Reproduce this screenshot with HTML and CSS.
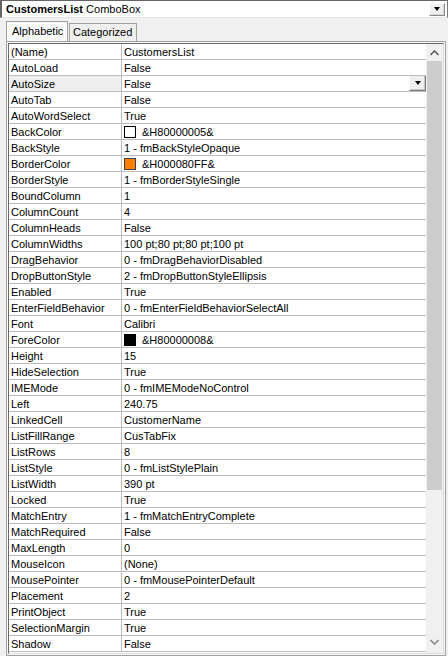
FILE: index.html
```html
<!DOCTYPE html>
<html>
<head>
<meta charset="utf-8">
<link rel="stylesheet" href="styles.css">
</head>
<body>
<div class="combo">
  <span class="combo-text"><b>CustomersList</b> ComboBox</span>
  <span class="drop-btn"><span class="tri"></span></span>
</div>
<div class="tabs">
  <div class="tab active">Alphabetic</div>
  <div class="tab">Categorized</div>
</div>
<div class="frame">
  <div class="inner">
    <div class="rows">
      <div class="row"><div class="name">(Name)</div><div class="val">CustomersList</div></div>
      <div class="row"><div class="name">AutoLoad</div><div class="val">False</div></div>
      <div class="row sel"><div class="name">AutoSize</div><div class="val">False<span class="cell-btn"><span class="tri"></span></span></div></div>
      <div class="row"><div class="name">AutoTab</div><div class="val">False</div></div>
      <div class="row"><div class="name">AutoWordSelect</div><div class="val">True</div></div>
      <div class="row"><div class="name">BackColor</div><div class="val"><span class="swatch white"></span>&amp;H80000005&amp;</div></div>
      <div class="row"><div class="name">BackStyle</div><div class="val">1 - fmBackStyleOpaque</div></div>
      <div class="row"><div class="name">BorderColor</div><div class="val"><span class="swatch orange"></span>&amp;H000080FF&amp;</div></div>
      <div class="row"><div class="name">BorderStyle</div><div class="val">1 - fmBorderStyleSingle</div></div>
      <div class="row"><div class="name">BoundColumn</div><div class="val">1</div></div>
      <div class="row"><div class="name">ColumnCount</div><div class="val">4</div></div>
      <div class="row"><div class="name">ColumnHeads</div><div class="val">False</div></div>
      <div class="row"><div class="name">ColumnWidths</div><div class="val">100 pt;80 pt;80 pt;100 pt</div></div>
      <div class="row"><div class="name">DragBehavior</div><div class="val">0 - fmDragBehaviorDisabled</div></div>
      <div class="row"><div class="name">DropButtonStyle</div><div class="val">2 - fmDropButtonStyleEllipsis</div></div>
      <div class="row"><div class="name">Enabled</div><div class="val">True</div></div>
      <div class="row"><div class="name">EnterFieldBehavior</div><div class="val">0 - fmEnterFieldBehaviorSelectAll</div></div>
      <div class="row"><div class="name">Font</div><div class="val">Calibri</div></div>
      <div class="row"><div class="name">ForeColor</div><div class="val"><span class="swatch black"></span>&amp;H80000008&amp;</div></div>
      <div class="row"><div class="name">Height</div><div class="val">15</div></div>
      <div class="row"><div class="name">HideSelection</div><div class="val">True</div></div>
      <div class="row"><div class="name">IMEMode</div><div class="val">0 - fmIMEModeNoControl</div></div>
      <div class="row"><div class="name">Left</div><div class="val">240.75</div></div>
      <div class="row"><div class="name">LinkedCell</div><div class="val">CustomerName</div></div>
      <div class="row"><div class="name">ListFillRange</div><div class="val">CusTabFix</div></div>
      <div class="row"><div class="name">ListRows</div><div class="val">8</div></div>
      <div class="row"><div class="name">ListStyle</div><div class="val">0 - fmListStylePlain</div></div>
      <div class="row"><div class="name">ListWidth</div><div class="val">390 pt</div></div>
      <div class="row"><div class="name">Locked</div><div class="val">True</div></div>
      <div class="row"><div class="name">MatchEntry</div><div class="val">1 - fmMatchEntryComplete</div></div>
      <div class="row"><div class="name">MatchRequired</div><div class="val">False</div></div>
      <div class="row"><div class="name">MaxLength</div><div class="val">0</div></div>
      <div class="row"><div class="name">MouseIcon</div><div class="val">(None)</div></div>
      <div class="row"><div class="name">MousePointer</div><div class="val">0 - fmMousePointerDefault</div></div>
      <div class="row"><div class="name">Placement</div><div class="val">2</div></div>
      <div class="row"><div class="name">PrintObject</div><div class="val">True</div></div>
      <div class="row"><div class="name">SelectionMargin</div><div class="val">True</div></div>
      <div class="row"><div class="name">Shadow</div><div class="val">False</div></div>
    </div>
    <div class="scrollbar">
      <div class="arrow">
        <svg width="9" height="6" viewBox="0 0 9 6"><path d="M0.5 5 L4.5 1 L8.5 5" fill="none" stroke="#606060" stroke-width="1.6"/></svg>
      </div>
      <div class="thumb"></div>
      <div class="track"></div>
      <div class="arrow down">
        <svg width="9" height="6" viewBox="0 0 9 6"><path d="M0.5 1 L4.5 5 L8.5 1" fill="none" stroke="#8a8a8a" stroke-width="1.6"/></svg>
      </div>
    </div>
  </div>
</div>
</body>
</html>
```

FILE: styles.css
```css
* {
  box-sizing: border-box;
}

html, body {
  margin: 0;
  padding: 0;
}

body {
  width: 448px;
  height: 656px;
  overflow: hidden;
  background: #f0f0f0;
  font-family: "Liberation Sans", Arial, sans-serif;
  font-size: 11px;
  color: #000;
}

/* object selector at the top */
.combo {
  height: 18px;
  display: flex;
  align-items: center;
  justify-content: space-between;
  background: #fff;
  border-style: solid;
  border-width: 1px 1px 1px 2px;
  border-color: #646464 #7a7a7a #e3e3e3 #646464;
  padding: 0 2px 0 4px;
}

.combo-text b {
  font-weight: bold;
}

.drop-btn {
  width: 16px;
  height: 13px;
  background: #f0f0f0;
  border: 1px solid;
  border-color: #fff #8a8a8a #8a8a8a #fff;
  box-shadow: inset -1px -1px 0 #d8d8d8;
  display: flex;
  align-items: center;
  justify-content: center;
}

.tri {
  width: 0;
  height: 0;
  border-left: 3.5px solid transparent;
  border-right: 3.5px solid transparent;
  border-top: 4px solid #000;
}

/* tab strip */
.tabs {
  display: flex;
  align-items: flex-end;
  height: 20px;
  margin-top: 3px;
  padding-left: 6px;
  gap: 1px;
}

.tab {
  height: 18px;
  width: 68px;
  padding: 2px 0 0 3px;
  border: 1px solid #a0a0a0;
  border-bottom: none;
  background: #f0f0f0;
  font-size: 11px;
}

.tab.active {
  height: 20px;
  width: 62px;
  padding: 3px 0 0 5px;
  background: #fafafa;
}

/* property grid frame */
.frame {
  margin-left: 6px;
  width: 440px;
  height: 615px;
  border: 1px solid #a0a0a0;
  background: #f7f7f7;
  padding: 1px;
}

.inner {
  display: flex;
  height: 100%;
  border-top: 1px solid #6a6a6a;
  border-left: 1px solid #6a6a6a;
  border-right: 1px solid #dcdcdc;
  border-bottom: 1px solid #dcdcdc;
  background: #fff;
  overflow: hidden;
}

.rows {
  width: 417px;
  flex: none;
}

.row {
  display: grid;
  grid-template-columns: 113px 1fr;
  height: 16px;
  border-bottom: 1px solid #bdbdbd;
  line-height: 14px;
  white-space: nowrap;
}

.name {
  padding: 1px 0 0 2px;
  border-right: 1px solid #bdbdbd;
  overflow: hidden;
}

.val {
  display: flex;
  align-items: center;
  padding: 1px 0 0 2px;
  overflow: hidden;
}

.sel .name {
  background: #efefef;
}

.cell-btn {
  margin-left: auto;
  width: 17px;
  height: 16px;
  align-self: flex-start;
  margin-top: -2px;
  background: #f0f0f0;
  border: 1px solid;
  border-color: #fff #7a7a7a #7a7a7a #fff;
  box-shadow: inset -1px -1px 0 #c8c8c8;
  display: flex;
  align-items: center;
  justify-content: center;
}

.swatch {
  width: 12px;
  height: 12px;
  border: 1px solid #000;
  margin: -1px 6px 0 0;
  flex: none;
}

.swatch.white { background: #fff; }
.swatch.orange { background: #ff8000; border-color: #404040; }
.swatch.black { background: #000; }

/* vertical scrollbar */
.scrollbar {
  width: 17px;
  flex: none;
  display: flex;
  flex-direction: column;
  background: #f0f0f0;
}

.arrow {
  height: 17px;
  flex: none;
  display: flex;
  align-items: center;
  justify-content: center;
}

.arrow.down {
  margin-bottom: 3px;
}

.thumb {
  height: 429px;
  margin: 0 1px;
  background: #cdcdcd;
  flex: none;
}

.track {
  flex: 1;
}
```
